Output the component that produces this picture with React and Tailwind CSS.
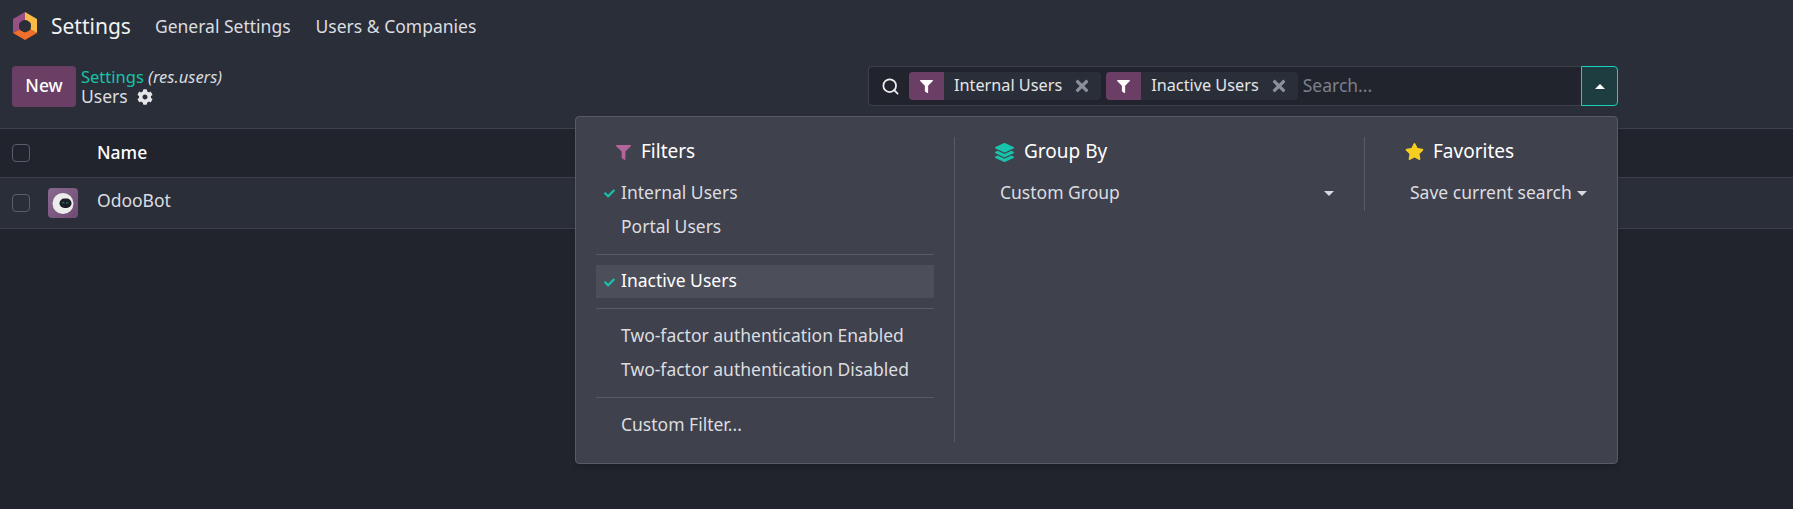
import { FaCheck, FaCog, FaFilter, FaLayerGroup, FaStar, FaTimes } from 'react-icons/fa';
import { Search } from 'lucide-react';

const Caret = ({ up = false }) => (
  <span
    className={`inline-block w-0 h-0 border-x-[5px] border-x-transparent ${up ? 'border-b-[5px] border-b-white' : 'border-t-[5px] border-t-[#d8dadd]'}`}
  />
);

const Logo = () => (
  <svg width="26" height="30" viewBox="0 0 26 30" className="shrink-0">
    <path d="M13 1 L13 9 L7.5 12 L7.5 18.5 L1 22 L1 8 Z" fill="#985184" />
    <path d="M13 1 L25 8 L25 22 L18.5 18.5 L18.5 12 L13 9 Z" fill="#fbb945" />
    <path d="M1 22 L7.5 18.5 L13 21.5 L18.5 18.5 L25 22 L13 29 Z" fill="#f06f2b" />
    <circle cx="13" cy="15" r="6" fill="#2a2e39" />
  </svg>
);

const BotAvatar = () => (
  <svg width="30" height="30" viewBox="0 0 30 30" className="shrink-0 rounded-[4px]">
    <defs>
      <linearGradient id="botBg" x1="0" y1="0" x2="1" y2="1">
        <stop offset="0" stopColor="#8a6a92" />
        <stop offset="1" stopColor="#6f4a72" />
      </linearGradient>
    </defs>
    <rect width="30" height="30" fill="url(#botBg)" />
    <circle cx="15" cy="15.5" r="10.5" fill="#ececec" />
    <rect x="11.5" y="10.5" width="12" height="9.5" rx="4.75" fill="#1b1d24" />
    <path d="M14.2 15.2 q1.1 -1.4 2.2 0 M18.2 15.2 q1.1 -1.4 2.2 0" stroke="#1fa5a0" strokeWidth="1" fill="none" />
  </svg>
);

const Chip = ({ label }) => (
  <div className="flex h-[28px] items-center rounded-[4px] bg-[#2a2e39]">
    <span className="flex h-full w-[35px] items-center justify-center rounded-l-[4px] bg-[#6b3e66] text-white">
      <FaFilter className="text-[13px]" />
    </span>
    <span className="pb-[1px] pl-[10px] text-[16.25px] text-[#e4e5e7]">{label}</span>
    <FaTimes className="ml-[11px] mr-[10px] text-[18px] text-[#8b8f9b]" />
  </div>
);

const FilterItem = ({ label, checked = false, active = false }) => (
  <div
    className={`relative flex items-center pb-[2px] pl-[25px] ${active ? 'h-[33px] bg-[#4c4e5a] text-white' : 'h-[34px] text-[#dcdde0]'}`}
  >
    {checked && <FaCheck className="absolute left-[8px] top-[12px] text-[11px] text-[#17c3aa]" />}
    {label}
  </div>
);

const Separator = () => <div className="my-[10px] h-px bg-[#585a66]" />;

const App = () => {
  return (
    <div className="relative flex h-[509px] w-full flex-col overflow-hidden bg-[#21242c] font-['Noto_Sans',sans-serif] text-[17.5px] text-[#dcdde0]">
      {/* Navbar */}
      <div className="flex h-[54px] items-center bg-[#2a2e39] pb-[2px] pl-[12px]">
        <Logo />
        <span className="ml-[13px] text-[21px] leading-none text-[#f2f2f3]">Settings</span>
        <span className="ml-[24px]">General Settings</span>
        <span className="ml-[25px]">Users &amp; Companies</span>
      </div>

      {/* Control panel */}
      <div className="flex h-[74px] items-start bg-[#2a2e39] pl-[12px] pr-[175px] pt-[12px]">
        <button className="flex h-[41px] w-[64px] items-center justify-center rounded-[4px] bg-[#6b3e66] pb-[2px] font-medium text-white">
          New
        </button>
        <div className="ml-[5px] flex flex-col">
          <div className="h-[21px] pt-[1px] text-[16.5px] leading-[20px]">
            <span className="text-[#17c3aa]">Settings</span> <em className="text-[#d8dadd]">(res.users)</em>
          </div>
          <div className="flex h-[19px] items-center leading-[19px]">
            <span>Users</span>
            <FaCog className="ml-[9px] text-[16px] text-[#e4e5e7]" />
          </div>
        </div>
        <div className="ml-auto flex h-[40px] w-[750px]">
          <div className="flex flex-1 items-center rounded-l-[4px] border border-r-0 border-[#3e414c] bg-[#21242c] pl-[12px]">
            <Search size={19} strokeWidth={2.2} className="text-[#f0f0f1]" />
            <div className="ml-[9px] flex gap-[5px]">
              <Chip label="Internal Users" />
              <Chip label="Inactive Users" />
            </div>
            <span className="ml-[5px] pb-[1px] text-[#7c808c]">Search...</span>
          </div>
          <button className="flex w-[37px] items-center justify-center rounded-r-[4px] border border-[#17d4c0] bg-[#1e3d40]">
            <Caret up />
          </button>
        </div>
      </div>

      {/* List */}
      <div className="flex h-[50px] items-center border-y border-[#3e414c] bg-[#21242c]">
        <span className="ml-[12px] size-[18px] rounded-[4px] border border-[#5b5e69]" />
        <span className="ml-[67px] pb-[2px] font-medium text-white">Name</span>
      </div>
      <div className="flex h-[51px] items-center border-b border-[#3e414c] bg-[#2a2e39]">
        <span className="ml-[12px] size-[18px] rounded-[4px] border border-[#5b5e69]" />
        <span className="ml-[18px]"><BotAvatar /></span>
        <span className="ml-[19px] -mt-[5px]">OdooBot</span>
      </div>

      {/* Search dropdown */}
      <div className="absolute left-[575px] top-[116px] flex h-[348px] w-[1043px] rounded-[4px] border border-[#585a66] bg-[#3f414c] pt-[20px] shadow-md">
        <div className="h-[305px] w-[379px] border-r border-[#585a66] pl-[20px] pr-[20px]">
          <div className="flex h-[30px] items-center pb-[2px] pl-[20px] text-[19px] text-white">
            <FaFilter className="mr-[10px] mt-[2px] text-[15px] text-[#b5649b]" />
            Filters
          </div>
          <div className="pt-[9px]">
            <FilterItem label="Internal Users" checked />
            <FilterItem label="Portal Users" />
            <Separator />
            <FilterItem label="Inactive Users" checked active />
            <Separator />
            <FilterItem label="Two-factor authentication Enabled" />
            <FilterItem label="Two-factor authentication Disabled" />
            <Separator />
            <FilterItem label="Custom Filter..." />
          </div>
        </div>
        <div className="h-[74px] w-[410px] border-r border-[#585a66] pl-[40px] pr-[30px]">
          <div className="flex h-[30px] items-center pb-[2px] text-[19px] text-white">
            <FaLayerGroup className="mr-[10px] mt-[2px] text-[19px] text-[#17c3aa]" />
            Group By
          </div>
          <div className="box-content flex h-[34px] items-center justify-between pl-[5px] pt-[9px]">
            <span className="pb-[2px]">Custom Group</span>
            <Caret />
          </div>
        </div>
        <div className="flex-1 pl-[40px]">
          <div className="flex h-[30px] items-center pb-[2px] text-[19px] text-white">
            <FaStar className="mr-[9px] mt-[1px] text-[19px] text-[#f7cd1f]" />
            Favorites
          </div>
          <div className="box-content flex h-[34px] items-center pl-[5px] pt-[9px]">
            <span className="pb-[2px]">Save current search</span>
            <span className="ml-[5px] flex"><Caret /></span>
          </div>
        </div>
      </div>
    </div>
  );
};

export default App;
